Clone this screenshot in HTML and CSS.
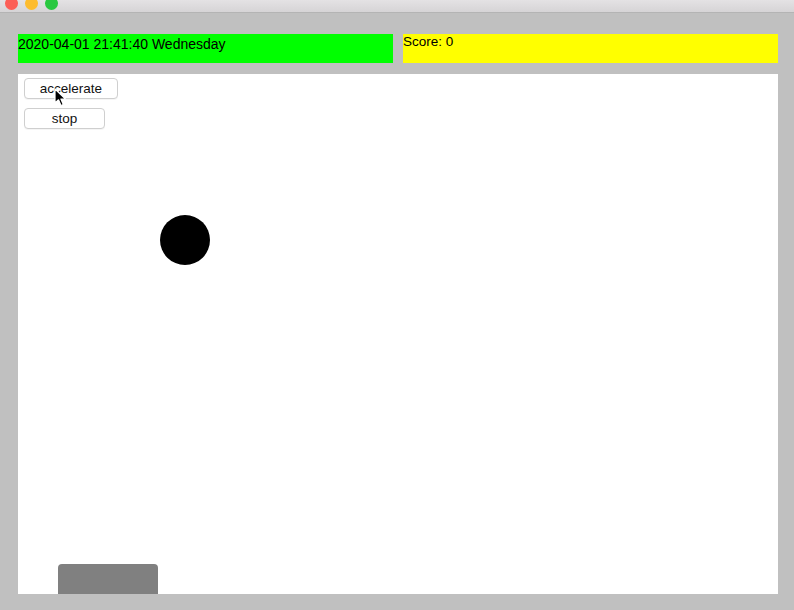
FILE: index.html
```html
<!DOCTYPE html>
<html>
<head>
<meta charset="utf-8">
<link rel="stylesheet" href="styles.css">
</head>
<body>
<div class="titlebar">
  <span class="light red"></span>
  <span class="light yellow"></span>
  <span class="light green"></span>
</div>
<div class="content">
  <div class="topbar">
    <div class="panel clock">2020-04-01 21:41:40 Wednesday</div>
    <div class="panel score">Score: 0</div>
  </div>
  <div class="canvas">
    <div class="controls">
      <button class="btn btn-acc">accelerate</button>
      <button class="btn btn-stop">stop</button>
    </div>
    <div class="ball"></div>
    <div class="paddle"></div>
    <svg class="cursor" width="14" height="20" viewBox="0 0 14 20">
      <path d="M1 1 L1 15 L4.5 11.8 L7 17.5 L9.3 16.5 L6.9 11 L11.5 11 Z" fill="#000" stroke="#fff" stroke-width="1.2" stroke-linejoin="round"/>
    </svg>
  </div>
</div>
</body>
</html>
```

FILE: styles.css
```css
html, body {
  margin: 0;
  padding: 0;
}
body {
  width: 794px;
  height: 610px;
  background: #c0c0c0;
  font-family: "Liberation Sans", Arial, Helvetica, sans-serif;
  font-size: 13px;
  color: #000;
  overflow: hidden;
}
.titlebar {
  height: 12px;
  background: linear-gradient(#e4e2e4, #d6d4d6);
  border-bottom: 1px solid #b4b4b4;
  position: relative;
  overflow: hidden;
}
.light {
  position: absolute;
  top: -3px;
  width: 13px;
  height: 13px;
  border-radius: 50%;
}
.light.red { left: 5px; background: #fc5f57; }
.light.yellow { left: 25px; background: #fdbc2e; }
.light.green { left: 45px; background: #29c840; }
.content {
  padding: 21px 16px 0 18px;
}
.topbar {
  display: flex;
  gap: 10px;
  height: 29px;
}
.panel {
  width: 375px;
  height: 29px;
  box-sizing: border-box;
}
.clock {
  background: #00ff00;
  font-size: 14px;
  line-height: 17px;
  padding-top: 2px;
}
.score {
  background: #ffff00;
  font-size: 13.5px;
  line-height: 16px;
}
.canvas {
  margin-top: 11px;
  width: 760px;
  height: 520px;
  background: #fff;
  position: relative;
  overflow: hidden;
}
.controls {
  display: flex;
  flex-direction: column;
  align-items: flex-start;
  gap: 9px;
  padding: 4px 0 0 6px;
}
.btn {
  font-family: "Liberation Sans", Arial, Helvetica, sans-serif;
  font-size: 13.5px;
  color: #111;
  background: #fff;
  border: 1px solid #cfcfcf;
  border-radius: 4px;
  height: 21px;
  padding: 0;
  line-height: 19px;
  box-shadow: 0 1px 0 rgba(0,0,0,0.04);
}
.btn-acc { width: 94px; }
.btn-stop { width: 81px; }
.ball {
  position: absolute;
  left: 142px;
  top: 141px;
  width: 50px;
  height: 50px;
  border-radius: 50%;
  background: #000;
}
.paddle {
  position: absolute;
  left: 40px;
  top: 490px;
  width: 100px;
  height: 30px;
  background: #808080;
  border-radius: 4px 4px 0 0;
}
.cursor {
  position: absolute;
  left: 36px;
  top: 14px;
}
```
